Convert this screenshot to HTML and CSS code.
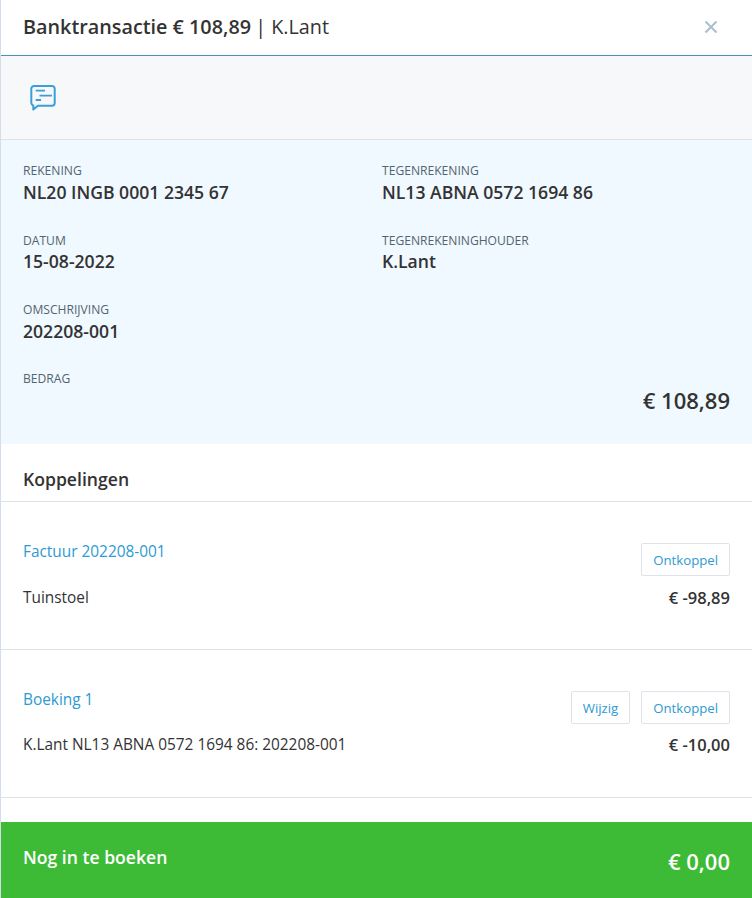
FILE: index.html
```html
<!DOCTYPE html>
<html lang="nl">
<head>
<meta charset="utf-8">
<title>Banktransactie</title>
<link rel="stylesheet" href="styles.css">
</head>
<body>
<div class="panel">
  <header class="head">
    <h1 class="title"><strong>Banktransactie € 108,89</strong> | K.Lant</h1>
    <svg class="close" width="14" height="14" viewBox="0 0 14 14" aria-hidden="true"><path d="M1.5 1.5l11 11M12.5 1.5l-11 11" fill="none" stroke="#a9bfcc" stroke-width="2"/></svg>
  </header>
  <div class="tools">
    <svg width="28" height="28" viewBox="0 0 28 28" aria-hidden="true">
      <path d="M5.300 3H23a2.700 2.700 0 0 1 2.700 2.700V20a2.700 2.700 0 0 1-2.700 2.700H9L4.300 26.500V22.500A2.700 2.700 0 0 1 2.300 20V5.700A2.700 2.700 0 0 1 5.300 3z" fill="none" stroke="#3a9fd8" stroke-width="2" stroke-linejoin="round"/>
      <path d="M6.700 7.700H16M10.500 12.700H23M6.700 17H12" fill="none" stroke="#3a9fd8" stroke-width="1.800"/>
    </svg>
  </div>
  <section class="info">
    <div class="grid">
      <div class="field"><div class="label">REKENING</div><div class="value">NL20 INGB 0001 2345 67</div></div>
      <div class="field"><div class="label">TEGENREKENING</div><div class="value">NL13 ABNA 0572 1694 86</div></div>
      <div class="field"><div class="label">DATUM</div><div class="value">15-08-2022</div></div>
      <div class="field"><div class="label">TEGENREKENINGHOUDER</div><div class="value">K.Lant</div></div>
      <div class="field"><div class="label">OMSCHRIJVING</div><div class="value">202208-001</div></div>
    </div>
    <div class="label amount-label">BEDRAG</div>
    <div class="amount">€ 108,89</div>
  </section>
  <h2 class="section-title">Koppelingen</h2>
  <div class="link-row link-row-first">
    <div class="row-top"><a class="link">Factuur 202208-001</a><div class="btns"><button class="btn">Ontkoppel</button></div></div>
    <div class="row-bottom"><span>Tuinstoel</span><strong>€ -98,89</strong></div>
  </div>
  <div class="link-row">
    <div class="row-top"><a class="link">Boeking 1</a><div class="btns"><button class="btn">Wijzig</button><button class="btn">Ontkoppel</button></div></div>
    <div class="row-bottom"><span>K.Lant NL13 ABNA 0572 1694 86: 202208-001</span><strong>€ -10,00</strong></div>
  </div>
  <footer class="total"><span class="total-label">Nog in te boeken</span><span class="total-value">€ 0,00</span></footer>
</div>
</body>
</html>
```
FILE: styles.css
```css
* { box-sizing: border-box; }
html, body { margin: 0; height: 100%; background: #fff; }
body { font-family: "Open Sans", sans-serif; color: #333; overflow: hidden; }
.panel { width: 752px; height: 898px; border-left: 1px solid #d5dcea; display: flex; flex-direction: column; }
.head { height: 56px; flex: none; display: flex; align-items: center; justify-content: space-between; padding: 0 34px 1px 22px; border-bottom: 1px solid #4a94b8; }
.title { margin: 0; font-size: 19.8px; font-weight: 400; line-height: 24px; }
.title strong { font-weight: 600; margin-right: -1px; }
.tools { height: 84px; flex: none; background: #f6f8fa; border-bottom: 1px solid #dde1e8; padding: 27px 0 0 28px; }
.tools svg { display: block; }
.info { height: 304px; flex: none; background: #f0f9ff; padding: 23px 22px 0 22px; }
.grid { display: grid; grid-template-columns: 359px 1fr; row-gap: 19.5px; }
.field { height: 50px; }
.label { font-size: 12.1px; line-height: 16px; color: #51646f; }
.value { font-size: 17.6px; font-weight: 600; line-height: 22px; margin-top: 1.5px; }
.amount-label { margin-top: 19px; }
.amount { text-align: right; font-size: 22px; font-weight: 600; line-height: 24px; margin-top: 0.5px; }
.section-title { margin: 0; height: 58px; flex: none; padding: 22px 22px 0; font-size: 17.6px; font-weight: 600; line-height: 26px; border-bottom: 1px solid #dfe2ea; }
.link-row { height: 148px; flex: none; padding: 41px 22px 0 22px; border-bottom: 1px solid #dfe2ea; font-size: 15.4px; }
.row-top { display: flex; justify-content: space-between; align-items: flex-start; height: 33px; }
.link { color: #2d9ad3; font-size: 15.4px; line-height: 18px; }
.btns { display: flex; gap: 11px; }
.btn { height: 33px; padding: 2px 11px 0; background: #fff; border: 1px solid #dfe2ea; border-radius: 2px; font: 400 13.2px/1 "Open Sans", sans-serif; color: #2d9ad3; }
.row-bottom { display: flex; justify-content: space-between; align-items: center; margin-top: 11px; line-height: 20px; }
.link-row-first .row-bottom { margin-top: 12px; }
.row-bottom strong { font-weight: 600; font-size: 16.5px; }
.total { margin-top: auto; height: 76px; flex: none; background: #3dbb36; color: #fff; display: flex; justify-content: space-between; align-items: flex-start; padding: 0 22px; font-weight: 600; }
.total-label { font-size: 17.6px; line-height: 24px; margin-top: 23px; }
.total-value { font-size: 22px; line-height: 30px; margin-top: 24px; }
```
